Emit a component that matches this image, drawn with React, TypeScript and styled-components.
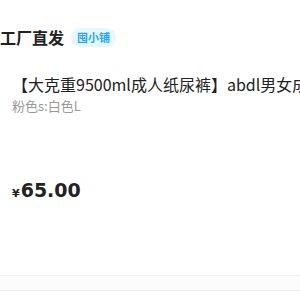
import React from "react";
import styled, { createGlobalStyle } from "styled-components";

const Global = createGlobalStyle`
  html, body { margin: 0; padding: 0; background: #fff; }
  body { font-family: "Noto Sans CJK SC", "Noto Sans", sans-serif; width: 300px; height: 300px; overflow: hidden; }
`;

const Card = styled.div`
  width: 300px;
  height: 300px;
  overflow: hidden;
  display: flex;
  flex-direction: column;
`;

const Header = styled.div`
  display: flex;
  align-items: center;
  height: 20px;
  margin-top: 27px;
  gap: 7px;
`;

const ShopName = styled.span`
  font-size: 16px;
  font-weight: 700;
  color: #222;
  line-height: 20px;
  white-space: nowrap;
`;

const Badge = styled.span`
  display: inline-flex;
  align-items: center;
  height: 19px;
  padding: 0 6px;
  border-radius: 10px;
  background: #e6f7ff;
  color: #2aa5f5;
  font-size: 11px;
  font-weight: 700;
`;

const Body = styled.div`
  padding-left: 12px;
  display: flex;
  flex-direction: column;
`;

const Title = styled.div`
  margin-top: 26px;
  font-size: 16px;
  line-height: 22px;
  color: #222;
  white-space: nowrap;
`;

const Spec = styled.div`
  margin-top: 2px;
  font-size: 13px;
  line-height: 18px;
  color: #999;
  white-space: nowrap;
`;

const Price = styled.div`
  margin-top: 64px;
  display: flex;
  align-items: baseline;
  color: #222;
  font-weight: 700;
  font-family: "DejaVu Sans", sans-serif;
  gap: 1px;
`;

const Yen = styled.span`
  font-size: 11px;
`;

const Amount = styled.span`
  font-size: 19px;
`;

const Footer = styled.div`
  margin-top: auto;
  margin-bottom: 9px;
  height: 14px;
  border-top: 1px solid #f0f0f0;
  border-bottom: 1px solid #ececec;
  background: #fcfcfc;
`;

export default function App() {
  return (
    <>
      <Global />
      <Card>
        <Header>
          <ShopName>工厂直发</ShopName>
          <Badge>囤小铺</Badge>
        </Header>
        <Body>
          <Title>【大克重9500ml成人纸尿裤】abdl男女成人纸尿裤</Title>
          <Spec>粉色s:白色L</Spec>
          <Price>
            <Yen>¥</Yen>
            <Amount>65.00</Amount>
          </Price>
        </Body>
        <Footer />
      </Card>
    </>
  );
}
